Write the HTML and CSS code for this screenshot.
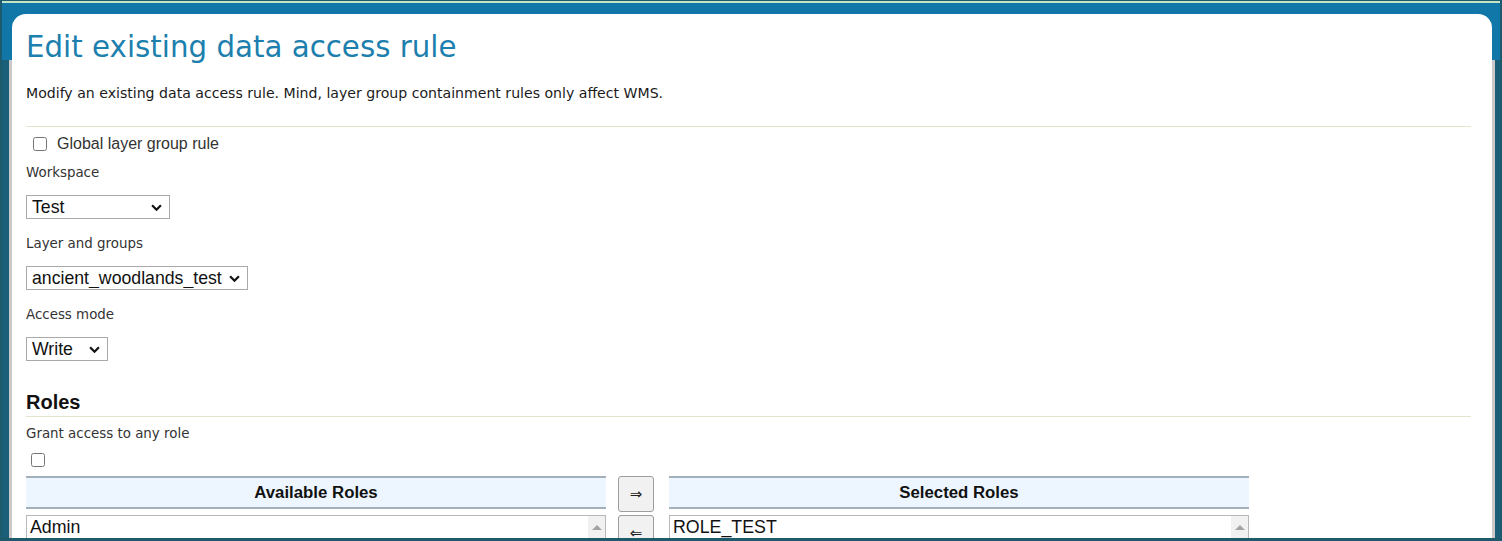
FILE: index.html
```html
<!DOCTYPE html>
<html lang="en">

<head>
    <meta charset="UTF-8">
    <meta name="viewport" content="width=device-width, initial-scale=1.0">
    <title>Edit existing data access rule</title>
    <link rel="stylesheet" href="styles.css">
</head>

<body>
    <div class="window">
        <div class="page">
            <div class="card">
                <h1>Edit existing data access rule</h1>
                <p class="intro">Modify an existing data access rule. Mind, layer group containment rules only affect WMS.</p>

                <form class="rule-form">
                    <label class="check-row">
                        <input type="checkbox" class="check">
                        <span>Global layer group rule</span>
                    </label>

                    <div class="field">
                        <label class="field-label" for="workspace">Workspace</label>
                        <span class="select-wrap ws">
                            <select id="workspace">
                                <option>Test</option>
                            </select>
                            <svg class="chevron" viewBox="0 0 10 6"><path d="M1 1l4 4 4-4" /></svg>
                        </span>
                    </div>

                    <div class="field">
                        <label class="field-label" for="layer">Layer and groups</label>
                        <span class="select-wrap layer">
                            <select id="layer">
                                <option>ancient_woodlands_test</option>
                            </select>
                            <svg class="chevron" viewBox="0 0 10 6"><path d="M1 1l4 4 4-4" /></svg>
                        </span>
                    </div>

                    <div class="field">
                        <label class="field-label" for="mode">Access mode</label>
                        <span class="select-wrap mode">
                            <select id="mode">
                                <option>Write</option>
                            </select>
                            <svg class="chevron" viewBox="0 0 10 6"><path d="M1 1l4 4 4-4" /></svg>
                        </span>
                    </div>

                    <h2>Roles</h2>
                    <div class="grant">
                        <label class="field-label" for="anyRole">Grant access to any role</label>
                        <input type="checkbox" id="anyRole" class="check">
                    </div>

                    <!-- role palette: available list, move buttons, selected list -->
                    <div class="palette">
                        <div class="palette-col">
                            <div class="palette-head">Available Roles</div>
                            <div class="listbox">
                                <div class="options">
                                    <div class="option">Admin</div>
                                </div>
                                <div class="scrollbar"><span class="arrow-up"></span></div>
                            </div>
                        </div>
                        <div class="palette-buttons">
                            <button type="button" class="move-btn">&rArr;</button>
                            <button type="button" class="move-btn">&lArr;</button>
                        </div>
                        <div class="palette-col">
                            <div class="palette-head">Selected Roles</div>
                            <div class="listbox">
                                <div class="options">
                                    <div class="option">ROLE_TEST</div>
                                </div>
                                <div class="scrollbar"><span class="arrow-up"></span></div>
                            </div>
                        </div>
                    </div>
                </form>
            </div>
        </div>
    </div>
</body>

</html>
```

FILE: styles.css
```css
html,
body {
    margin: 0;
    padding: 0;
}

body {
    font-family: "DejaVu Sans", Verdana, sans-serif;
    color: #222;
    background: #1d5a6c;
}

.window {
    width: 1502px;
    height: 541px;
    box-sizing: border-box;
    border: 2px solid #1d5a6c;
    border-top-width: 1px;
    border-bottom-width: 3px;
    overflow: hidden;
}

.page {
    height: 100%;
    box-sizing: border-box;
    border-top: 2px solid #bfe4c6;
    padding: 11px 8px 0 10px;
    background:
        linear-gradient(#1177a8, #1177a8) top left / 100% 57px no-repeat,
        linear-gradient(to right, #1b5e78 7px, #cdc8c8 7px, #cdc8c8 calc(100% - 5px), #1b5e78 calc(100% - 5px));
}

.card {
    height: 100%;
    background: #fff;
    border-radius: 14px 14px 0 0;
    padding: 15px 21px 0 14px;
    box-sizing: border-box;
    overflow: hidden;
}

h1 {
    margin: 0;
    font-size: 29.3px;
    line-height: 37px;
    font-weight: normal;
    color: #1d7fae;
}

.intro {
    margin: 18px 0 0;
    font-size: 14.1px;
    line-height: 18px;
    color: #1a1a1a;
    padding-bottom: 24px;
    border-bottom: 1px solid #dfe7cc;
}

.check-row {
    display: flex;
    align-items: center;
    gap: 10px;
    margin-top: 7px;
    height: 20px;
    font-family: "Liberation Sans", Arial, sans-serif;
    font-size: 16px;
    color: #333;
}

.check {
    width: 14px;
    height: 14px;
    margin: 0 0 0 7px;
}

.field {
    display: flex;
    flex-direction: column;
    align-items: flex-start;
}

.field-label {
    display: block;
    font-size: 13.4px;
    line-height: 18px;
    color: #333;
}

.check-row + .field {
    margin-top: 10px;
}

.field + .field {
    margin-top: 16px;
}

.select-wrap {
    position: relative;
    display: inline-block;
    margin-top: 13px;
}

.select-wrap select {
    appearance: none;
    -webkit-appearance: none;
    display: block;
    height: 24px;
    box-sizing: border-box;
    border: 1px solid #aaa;
    border-radius: 0;
    background: #fff;
    font-family: "Liberation Sans", Arial, sans-serif;
    font-size: 17.7px;
    color: #111;
    padding: 0 0 0 5px;
    margin: 0;
}

.ws select {
    width: 144px;
}

.layer select {
    width: 222px;
}

.mode select {
    width: 82px;
}

.chevron {
    position: absolute;
    right: 8px;
    top: 9px;
    width: 11px;
    height: 7px;
    pointer-events: none;
    fill: none;
    stroke: #111;
    stroke-width: 2;
}

h2 {
    margin: 29px 0 0;
    font-family: "Liberation Sans", Arial, sans-serif;
    font-size: 20px;
    line-height: 25px;
    color: #111;
    padding-bottom: 1px;
    border-bottom: 1px solid #dfe7cc;
}

.grant {
    margin-top: 8px;
}

.grant .check {
    display: block;
    margin: 10px 0 0 5px;
}

.palette {
    display: flex;
    align-items: flex-start;
    margin-top: 9px;
}

.palette-col {
    width: 580px;
}

.palette-head {
    height: 29px;
    line-height: 29px;
    border-top: 2px solid #a3b1bd;
    border-bottom: 2px solid #a3b1bd;
    background: #edf6ff;
    text-align: center;
    font-family: "Liberation Sans", Arial, sans-serif;
    font-weight: bold;
    font-size: 16.8px;
    color: #111;
}

.listbox {
    display: flex;
    margin-top: 6px;
    height: 80px;
    border: 1px solid #b8b8b8;
}

.options {
    flex: 1;
    padding: 1px 3px;
    font-family: "Liberation Sans", Arial, sans-serif;
    font-size: 17.8px;
    color: #111;
}

.scrollbar {
    width: 17px;
    background: #f1f1f1;
    display: flex;
    justify-content: center;
    padding-top: 9px;
    box-sizing: border-box;
}

.arrow-up {
    width: 0;
    height: 0;
    border-left: 5px solid transparent;
    border-right: 5px solid transparent;
    border-bottom: 5px solid #a3a3a3;
}

.palette-buttons {
    display: flex;
    flex-direction: column;
    gap: 3px;
    margin: 0 15px 0 12px;
}

.move-btn {
    width: 36px;
    height: 36px;
    padding: 0;
    border: 1px solid #9d9d9d;
    border-radius: 3px;
    background: #f1f1f1;
    font-family: "DejaVu Sans", sans-serif;
    font-size: 15px;
    color: #222;
}
```
